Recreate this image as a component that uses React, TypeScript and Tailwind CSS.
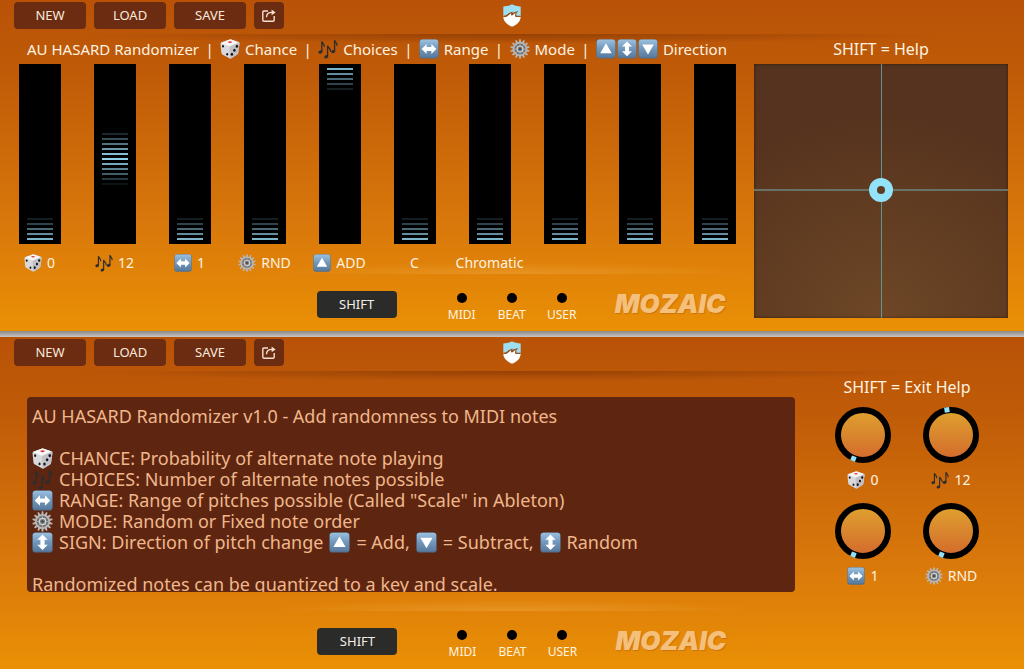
import React, { useState } from "react";

type IconProps = { className?: string };

function KeyTile({ className, children }: IconProps & { children: React.ReactNode }) {
  return (
    <svg viewBox="0 0 20 20" className={className} aria-hidden="true">
      <defs>
        <linearGradient id="tile" x1="0" y1="0" x2="0" y2="1">
          <stop offset="0" stopColor="#9cc0de" />
          <stop offset="0.5" stopColor="#7198bd" />
          <stop offset="1" stopColor="#587a9c" />
        </linearGradient>
      </defs>
      <rect x="0.4" y="0.4" width="19.2" height="19.2" rx="3" fill="#506f8d" />
      <rect x="0.8" y="0.6" width="18.4" height="18" rx="2.6" fill="url(#tile)" />
      {children}
    </svg>
  );
}

const LeftRight = ({ className }: IconProps) => (
  <KeyTile className={className}>
    <path d="M2.6 10 7.6 5v3h4.8V5l5 5-5 5v-3H7.6v3z" fill="#fff" />
  </KeyTile>
);
const UpDown = ({ className }: IconProps) => (
  <KeyTile className={className}>
    <path d="M10 2.4 15 7.4h-3v4.8h3l-5 5-5-5h3V7.4H5z" fill="#fff" />
  </KeyTile>
);
const Up = ({ className }: IconProps) => (
  <KeyTile className={className}>
    <path d="M10 4.2 15.8 14.2H4.2z" fill="#fff" />
  </KeyTile>
);
const Down = ({ className }: IconProps) => (
  <KeyTile className={className}>
    <path d="M10 15.4 4.2 5.4h11.6z" fill="#fff" />
  </KeyTile>
);

function Dice({ className }: IconProps) {
  return (
    <svg viewBox="0 0 20 20" className={className} aria-hidden="true">
      <path d="M9.6.5Q10.4.3 11.2.6L18.6 3Q19.6 3.4 19.5 4.6L18.2 14Q18 15 17.2 15.6L11.4 19.3Q10.4 19.8 9.4 19.2L2.4 15.4Q1.5 14.8 1.4 13.8L.5 5Q.4 3.8 1.5 3.3z" fill="#d9d9dc" />
      <path d="M9.6.5Q10.4.3 11.2.6L18.8 3.4 9.6 7.6.9 3.9z" fill="#f6f6f6" />
      <path d="M9.6 7.6 19.2 3.4Q19.6 4 19.5 4.6L18.2 14Q18 15 17.2 15.6L11.4 19.3Q10.6 19.7 9.9 19.4z" fill="#c0c0c5" />
      <ellipse cx="10" cy="3.1" rx="2" ry="0.9" fill="#e0393e" />
      <g fill="#17171a">
        <ellipse cx="3" cy="7.3" rx="1" ry="1.3" />
        <ellipse cx="7.2" cy="15.2" rx="1" ry="1.3" />
        <ellipse cx="16.9" cy="7.2" rx="1.2" ry="1.5" />
        <ellipse cx="14.4" cy="11.2" rx="1.2" ry="1.5" />
        <ellipse cx="11.9" cy="15.2" rx="1.2" ry="1.5" />
      </g>
    </svg>
  );
}

function Notes({ className }: IconProps) {
  return (
    <svg viewBox="0 0 20 20" className={className} aria-hidden="true">
      <g fill="none" stroke="#2b2d30" strokeWidth="1.3" strokeLinecap="round">
        <path d="M3.8 12.6V2.4c.4 2 2.6 2.2 2.4 5" />
        <path d="M9.6 17.4V6.6c.4 2.2 2.8 2.4 3 5.6" />
        <path d="M16.6 12.2V1.2c.3 2 2.6 2.2 2.4 5.2" />
      </g>
      <g fill="#2b2d30">
        <ellipse cx="2.4" cy="13" rx="2" ry="1.6" transform="rotate(-20 2.4 13)" />
        <ellipse cx="8.2" cy="17.8" rx="2" ry="1.6" transform="rotate(-20 8.2 17.8)" />
        <ellipse cx="15.2" cy="12.6" rx="2" ry="1.6" transform="rotate(-20 15.2 12.6)" />
      </g>
    </svg>
  );
}

const TEETH = Array.from({ length: 14 }, (_, i) => (i * 360) / 14);

function Gear({ className }: IconProps) {
  return (
    <svg viewBox="0 0 20 20" className={className} aria-hidden="true">
      <g fill="#b8b5b2">
        {TEETH.map((angle) => (
          <path key={angle} d="M8.8 3.4 9.3.3h1.4l.5 3.1z" transform={`rotate(${angle} 10 10)`} />
        ))}
      </g>
      <circle cx="10" cy="10" r="6.4" fill="#6e7378" stroke="#b9b6b3" strokeWidth="1.7" />
      <path d="M10 4v12M4 10h12M5.8 5.8l8.4 8.4M14.2 5.8l-8.4 8.4" stroke="#a5a6a8" strokeWidth="0.9" />
      <circle cx="10" cy="10" r="3" fill="#777b80" stroke="#d5d3d0" strokeWidth="1.2" />
      <circle cx="10" cy="10" r="1.2" fill="#44474b" />
    </svg>
  );
}

function Shield() {
  return (
    <svg viewBox="0 0 18 23" className="h-[23px] w-[18px]" role="img" aria-label="App badge">
      <path d="M9 .3C6.5 1.8 3.4 2.3.3 2.4V12h17.4V2.4C14.6 2.3 11.5 1.8 9 .3z" fill="#9fdff2" />
      <path d="M.3 12.2h17.4c0 5.4-3.8 8.4-8.7 10.5C4.1 20.6.3 17.6.3 12.2z" fill="#fff" />
      <path d="M.3 11.8C4 11.6 5 8.600 9.800 7.400L9.200 9C10.600 8.200 12.400 7.400 15.600 7.200 13.400 8.600 12.800 10.300 13.600 11.700H17.700V13H.3z" fill="#94501f" />
      <path d="M2.500 13.200C5.500 12.400 6 10.200 8.300 9.300 7.600 10.700 8 11.300 8.900 11.500 10.600 10.900 11 9.500 12.800 8.800 11.800 10.600 11.800 12 12.700 13.200z" fill="#fff" />
    </svg>
  );
}

function ShareIcon() {
  return (
    <svg viewBox="0 0 14 13" className="h-[13px] w-[14px]" fill="none" stroke="#f6dfd0" strokeWidth="1.4" aria-hidden="true">
      <path d="M6 2H2Q.8 2 .8 3.2V11Q.8 12.2 2 12.2h9Q12.2 12.2 12.2 11V7" />
      <path d="M4.5 8.2C4.6 5.2 6.6 3.4 10 3.4" />
      <path d="M9.6.4 13.6 3.4 9.6 6.3z" fill="#f6dfd0" stroke="none" />
    </svg>
  );
}

const toolButton =
  "flex h-[27px] items-center justify-center rounded bg-[#6b2c12] text-[13px] text-[#fbe9dc]";

function Toolbar() {
  return (
    <header className="grid h-[34px] grid-cols-[1fr_auto_1fr] items-start px-3.5 pt-0.5">
      <div className="flex gap-2">
        {["NEW", "LOAD", "SAVE"].map((name) => (
          <button key={name} type="button" className={`${toolButton} w-[72px]`}>
            {name}
          </button>
        ))}
        <button type="button" aria-label="Share" className={`${toolButton} w-[30px]`}>
          <ShareIcon />
        </button>
      </div>
      <div className="pt-0.5">
        <Shield />
      </div>
    </header>
  );
}

function Footer({ className }: { className: string }) {
  return (
    <footer className={`flex h-10 items-start ${className}`}>
      <button type="button" className="h-[27px] w-20 shrink-0 rounded bg-[#2b2b2a] text-[13px] text-[#f5efe8]">
        SHIFT
      </button>
      <div className="ml-10 flex">
        {["MIDI", "BEAT", "USER"].map((name) => (
          <div key={name} className="flex w-[50px] flex-col items-center gap-1 pt-0.5 text-xs text-[#fff3e0]">
            <span className="size-2.5 rounded-full bg-black" />
            {name}
          </div>
        ))}
      </div>
      <div className="ml-7 font-['Inter'] text-[26px] leading-[25px] font-black text-[#f5c07c] italic [text-shadow:1px_1px_1px_#c87510]">
        MOZAIC
      </div>
    </footer>
  );
}

const SEGMENTS = Array.from({ length: 35 }, (_, i) => i);

function Fader({ name, initial }: { name: string; initial: number }) {
  const [value, setValue] = useState(initial);
  const centre = 35 - (value / 100) * 36;
  return (
    <div className="relative flex h-[180px] w-[42px] flex-col items-center gap-[3px] bg-black pt-1">
      {SEGMENTS.map((k) => (
        <span
          key={k}
          className="h-0.5 w-[26px] shrink-0 bg-[#95d9f3]"
          style={{ opacity: Math.max(0, 1 - Math.abs(k - centre) / 5.8) }}
        />
      ))}
      <input
        type="range"
        aria-label={name}
        value={value}
        onChange={(e) => setValue(Number(e.target.value))}
        className="absolute inset-0 h-full w-full cursor-pointer opacity-0 [direction:rtl] [writing-mode:vertical-lr]"
      />
    </div>
  );
}

function Knob({ name, initial }: { name: string; initial: number }) {
  const [value, setValue] = useState(initial);
  return (
    <div className="relative size-14">
      <svg viewBox="0 0 56 56" className="size-14" aria-hidden="true">
        <defs>
          <linearGradient id="knob" x1="0" y1="0" x2="0" y2="1">
            <stop offset="0" stopColor="#dfa22f" />
            <stop offset="1" stopColor="#d3692c" />
          </linearGradient>
        </defs>
        <circle cx="28" cy="28" r="25" fill="url(#knob)" stroke="#000" strokeWidth="6" />
        <rect x="25.5" y="0" width="5" height="5" fill="#92e2f7" transform={`rotate(${202 + value * 3.1} 28 28)`} />
      </svg>
      <input
        type="range"
        aria-label={name}
        value={value}
        onChange={(e) => setValue(Number(e.target.value))}
        className="absolute inset-0 h-full w-full cursor-pointer opacity-0"
      />
    </div>
  );
}

type Control = { name: string; level: number; text?: string; Icon?: (p: IconProps) => React.ReactNode };

const controls: Control[] = [
  { name: "Chance", level: 0, text: "0", Icon: Dice },
  { name: "Choices", level: 48, text: "12", Icon: Notes },
  { name: "Range", level: 0, text: "1", Icon: LeftRight },
  { name: "Mode", level: 0, text: "RND", Icon: Gear },
  { name: "Direction", level: 100, text: "ADD", Icon: Up },
  { name: "Key", level: 0, text: "C" },
  { name: "Scale", level: 0, text: "Chromatic" },
  { name: "Fader 8", level: 0 },
  { name: "Fader 9", level: 0 },
  { name: "Fader 10", level: 0 },
];

function Caption({ control, className }: { control: Control; className: string }) {
  const { Icon, text } = control;
  return (
    <div className={`flex items-center justify-center gap-[5px] text-sm text-[#fff3e0] ${className}`}>
      {Icon && <Icon className="size-[18px]" />}
      {text}
    </div>
  );
}

function XYPad() {
  return (
    <div
      role="img"
      aria-label="XY pad"
      className="relative aspect-square w-full bg-[radial-gradient(ellipse_90%_80%_at_50%_100%,#6d4726,#56331e)] shadow-[inset_0_0_3px_rgba(0,0,0,0.5)]"
    >
      <div className="absolute inset-y-0 left-1/2 w-px bg-[#629497]" />
      <div className="absolute inset-x-0 top-[49.5%] h-0.5 -translate-y-1/2 bg-[#6a7268]" />
      <div className="absolute top-[49.5%] left-1/2 size-6 -translate-x-1/2 -translate-y-1/2 rounded-full border-8 border-[#92e2f9] bg-[#5d3a20]" />
    </div>
  );
}

const titleItem = "flex items-center gap-[5px]";
const panel =
  "[background:radial-gradient(ellipse_50%_100%_at_50%_0%,rgba(70,20,0,0.32),transparent)_50%_34px/880px_10px_no-repeat,radial-gradient(ellipse_50%_100%_at_50%_100%,rgba(255,210,130,0.22),transparent)_50%_262px/480px_12px_no-repeat,linear-gradient(#b95207,#bf5b08_22%,#d9780b_68%,#ea9005)]";

function HelpLine({ Icon, children }: { Icon?: (p: IconProps) => React.ReactNode; children?: React.ReactNode }) {
  return (
    <p className="flex h-[21px] items-center gap-1.5">
      {Icon && <Icon className="size-[21px]" />}
      {children}
    </p>
  );
}

export default function App() {
  return (
    <main className="flex min-h-screen flex-col bg-[#b5aaa0] font-['Noto_Sans',sans-serif]">
      <section className={panel}>
        <Toolbar />
        <div className="flex">
          <div className="min-w-0 flex-1">
            <h1 className="flex h-[30px] items-center justify-between px-[27px] text-[15px] whitespace-nowrap text-[#fff3e0]">
              <span>AU HASARD Randomizer</span>
              <span>|</span>
              <span className={titleItem}><Dice className="size-5" />Chance</span>
              <span>|</span>
              <span className={titleItem}><Notes className="size-5" />Choices</span>
              <span>|</span>
              <span className={titleItem}><LeftRight className="size-5" />Range</span>
              <span>|</span>
              <span className={titleItem}><Gear className="size-5" />Mode</span>
              <span>|</span>
              <span className={titleItem}>
                <span className="flex gap-px">
                  <Up className="size-5" />
                  <UpDown className="size-5" />
                  <Down className="size-5" />
                </span>
                Direction
              </span>
            </h1>
            <div className="grid grid-cols-10 px-0.5">
              {controls.map((control) => (
                <div key={control.name} className="flex flex-col items-center">
                  <Fader name={control.name} initial={control.level} />
                  <Caption control={control} className="h-[38px]" />
                </div>
              ))}
            </div>
            <Footer className="mt-[9px] pl-[42%]" />
          </div>
          <div className="mr-4 w-[254px] shrink-0">
            <h2 className="flex h-[30px] items-center justify-center text-base text-[#fff3e0]">SHIFT = Help</h2>
            <XYPad />
          </div>
        </div>
      </section>

      <div className="h-1.5 bg-linear-to-b from-[#8d8884] to-[#c6c6c6]" />

      <section className={`flex-1 ${panel}`}>
        <Toolbar />
        <div className="flex gap-6 pr-[29px] pl-[27px]">
          <div className="mt-[26px] h-[195px] min-w-0 flex-1 overflow-hidden rounded bg-[#5e2610] px-[5px] pt-[9px] text-[18px] leading-[21px] whitespace-nowrap text-[#f0b78c]">
            <HelpLine>AU HASARD Randomizer v1.0 - Add randomness to MIDI notes</HelpLine>
            <HelpLine />
            <HelpLine Icon={Dice}>CHANCE: Probability of alternate note playing</HelpLine>
            <HelpLine Icon={Notes}>CHOICES: Number of alternate notes possible</HelpLine>
            <HelpLine Icon={LeftRight}>RANGE: Range of pitches possible (Called "Scale" in Ableton)</HelpLine>
            <HelpLine Icon={Gear}>MODE: Random or Fixed note order</HelpLine>
            <HelpLine Icon={UpDown}>
              <span>SIGN: Direction of pitch change</span>
              <Up className="size-[21px]" />
              <span>= Add,</span>
              <Down className="size-[21px]" />
              <span>= Subtract,</span>
              <UpDown className="size-[21px]" />
              <span>Random</span>
            </HelpLine>
            <HelpLine />
            <HelpLine>Randomized notes can be quantized to a key and scale.</HelpLine>
          </div>
          <div className="w-44 shrink-0">
            <h2 className="flex h-8 items-center justify-center text-base text-[#fff3e0]">SHIFT = Exit Help</h2>
            <div className="mt-1 grid grid-cols-2 gap-y-1.5">
              {controls.slice(0, 4).map((control) => (
                <div key={control.name} className="flex flex-col items-center">
                  <Knob name={`${control.name} knob`} initial={control.level} />
                  <Caption control={control} className="h-[34px]" />
                </div>
              ))}
            </div>
          </div>
        </div>
        <Footer className="mt-[35px] pl-[31%]" />
      </section>
    </main>
  );
}
